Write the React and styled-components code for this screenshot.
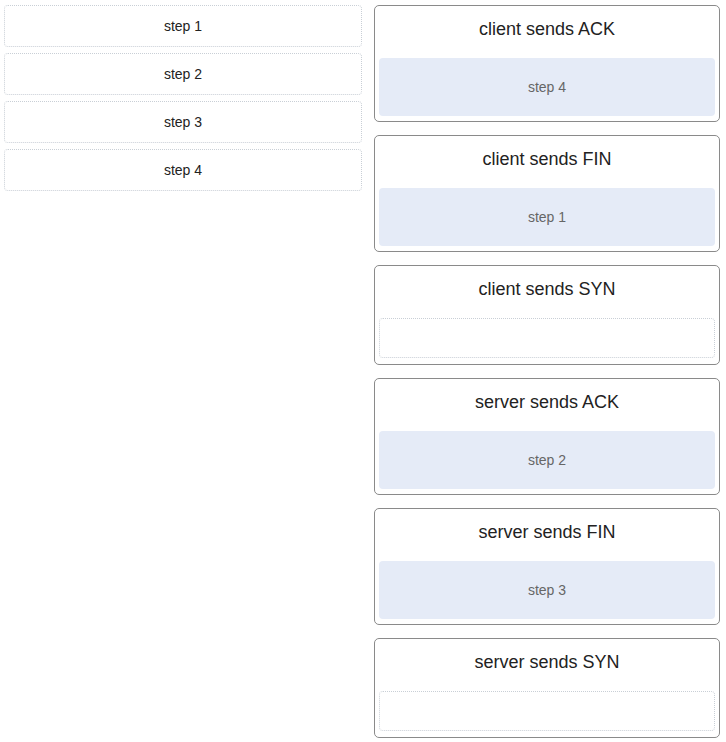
import React from "react";
import styled, { createGlobalStyle } from "styled-components";

const Global = createGlobalStyle`
  html, body { margin: 0; padding: 0; background: #fff; }
  body { font-family: Arial, "Liberation Sans", Helvetica, sans-serif; }
  * { box-sizing: border-box; }
`;

const Page = styled.div`
  display: grid;
  grid-template-columns: 358px 346px;
  column-gap: 12px;
  align-items: start;
  padding: 5px 0 0 4px;
`;

const SourceList = styled.div`
  display: flex;
  flex-direction: column;
  gap: 6px;
`;

const StepItem = styled.div`
  height: 42px;
  display: flex;
  align-items: center;
  justify-content: center;
  border: 1px dotted #c9cfd6;
  border-radius: 4px;
  font-size: 14px;
  color: #222;
  background: #fff;
`;

const TargetList = styled.div`
  display: flex;
  flex-direction: column;
  gap: 13px;
`;

const Card = styled.div`
  border: 1px solid #8a8a8a;
  border-radius: 5px;
  padding: 4px 4px ${(p) => (p.$filled ? "5px" : "6px")};
  background: #fff;
`;

const CardTitle = styled.div`
  height: 48px;
  display: flex;
  align-items: center;
  justify-content: center;
  font-size: 18px;
  color: #222;
  padding-bottom: 10px;
`;

const Slot = styled.div`
  height: ${(p) => (p.$filled ? "58px" : "40px")};
  display: flex;
  align-items: center;
  justify-content: center;
  border-radius: 4px;
  font-size: 14px;
  color: #666;
  background: ${(p) => (p.$filled ? "#e5ebf7" : "#fff")};
  border: ${(p) => (p.$filled ? "none" : "1px dotted #c9cfd6")};
`;

const steps = ["step 1", "step 2", "step 3", "step 4"];

const targets = [
  { title: "client sends ACK", value: "step 4" },
  { title: "client sends FIN", value: "step 1" },
  { title: "client sends SYN", value: null },
  { title: "server sends ACK", value: "step 2" },
  { title: "server sends FIN", value: "step 3" },
  { title: "server sends SYN", value: null },
];

export default function App() {
  return (
    <>
      <Global />
      <Page>
        <SourceList>
          {steps.map((s) => (
            <StepItem key={s}>{s}</StepItem>
          ))}
        </SourceList>
        <TargetList>
          {targets.map((t) => (
            <Card key={t.title} $filled={!!t.value}>
              <CardTitle>{t.title}</CardTitle>
              <Slot $filled={!!t.value}>{t.value}</Slot>
            </Card>
          ))}
        </TargetList>
      </Page>
    </>
  );
}
